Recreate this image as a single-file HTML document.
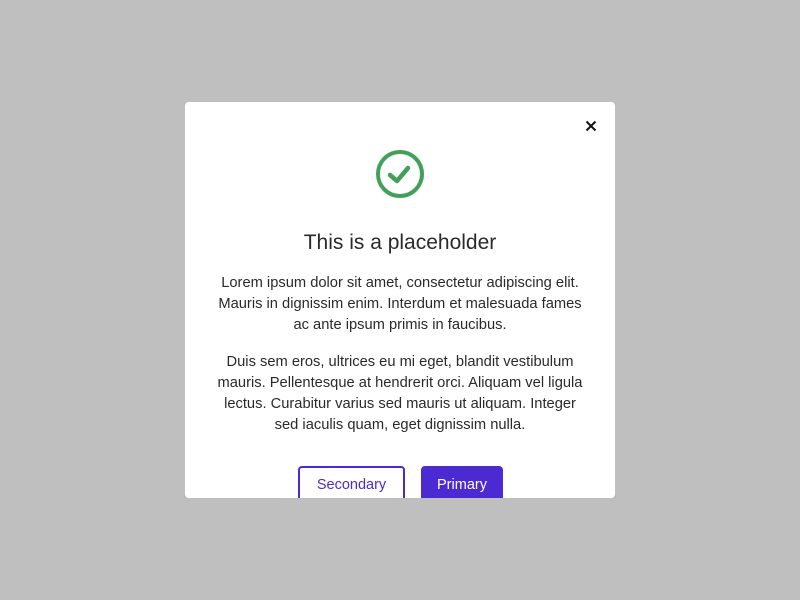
<!DOCTYPE html>
<html><head><style>
html,body{margin:0;width:800px;height:600px;background:#bfbfbf;font-family:"Liberation Sans",sans-serif;overflow:hidden}
.m{position:absolute;left:185px;top:102px;width:430px;height:396px;background:#fff;border-radius:4px;overflow:hidden}
.x{position:absolute;left:400px;top:18px}
.ic{position:absolute;left:190px;top:47px}
h1{position:absolute;left:0;width:430px;top:129px;margin:0;text-align:center;font-weight:normal;font-size:21px;color:#2a2a2a;line-height:24px}
p{position:absolute;left:31px;width:368px;margin:0;text-align:center;font-size:14.7px;line-height:21px;color:#2a2a2a}
.b{position:absolute;top:364px;height:36px;box-sizing:border-box;border-radius:4px;font-size:14.5px;line-height:34px;text-align:center}
.s{left:113px;width:107px;border:2px solid #4b2ad3;color:#4b2ad3;background:#fff}
.p{left:236px;width:82px;background:#4b2ad3;color:#fff;border:2px solid #4b2ad3}
</style></head><body>
<div class="m">
<svg class="x" width="12" height="12" viewBox="0 0 12 12"><path d="M1.5 1.5L10.5 10.5M10.5 1.5L1.5 10.5" stroke="#111" stroke-width="2"/></svg>
<svg class="ic" width="50" height="50" viewBox="0 0 50 50"><circle cx="25" cy="25" r="22" fill="none" stroke="#43a05a" stroke-width="4"/><path d="M15 26L22 32L33 19" fill="none" stroke="#43a05a" stroke-width="4.5" stroke-linecap="round" stroke-linejoin="round"/></svg>
<h1>This is a placeholder</h1>
<p style="top:171px">Lorem ipsum dolor sit amet, consectetur adipiscing elit. Mauris in dignissim enim. Interdum et malesuada fames ac ante ipsum primis in faucibus.</p>
<p style="top:250px">Duis sem eros, ultrices eu mi eget, blandit vestibulum mauris. Pellentesque at hendrerit orci. Aliquam vel ligula lectus. Curabitur varius sed mauris ut aliquam. Integer sed iaculis quam, eget dignissim nulla.</p>
<div class="b s">Secondary</div>
<div class="b p">Primary</div>
</div>
</body></html>
